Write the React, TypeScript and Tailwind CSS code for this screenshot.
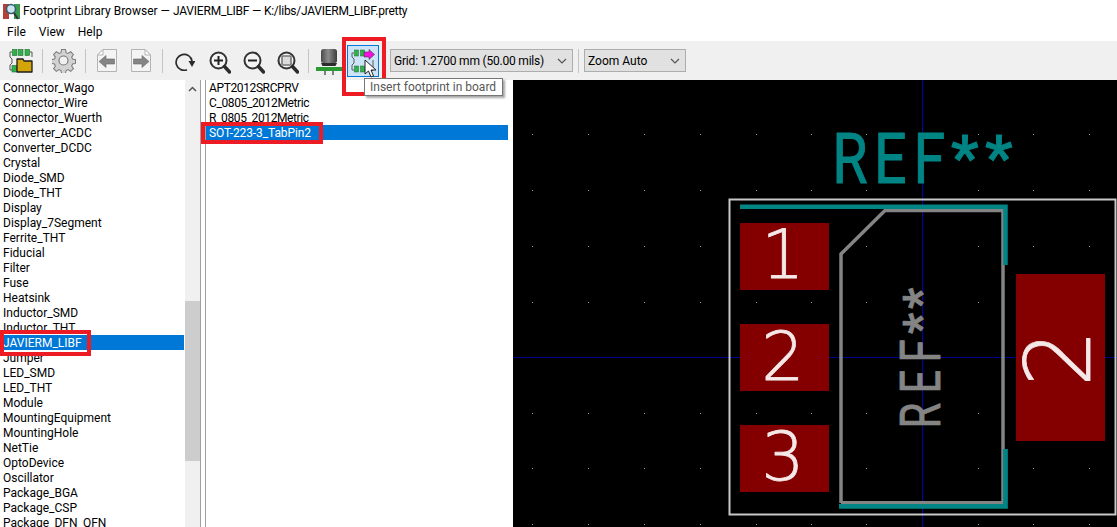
import React from "react";

const libraries = [
  "Connector_Wago", "Connector_Wire", "Connector_Wuerth", "Converter_ACDC", "Converter_DCDC", "Crystal",
  "Diode_SMD", "Diode_THT", "Display", "Display_7Segment", "Ferrite_THT", "Fiducial", "Filter", "Fuse",
  "Heatsink", "Inductor_SMD", "Inductor_THT", "JAVIERM_LIBF", "Jumper", "LED_SMD", "LED_THT", "Module",
  "MountingEquipment", "MountingHole", "NetTie", "OptoDevice", "Oscillator", "Package_BGA", "Package_CSP",
  "Package_DFN_QFN",
];
const footprints = ["APT2012SRCPRV", "C_0805_2012Metric", "R_0805_2012Metric", "SOT-223-3_TabPin2"];

const gridXs = [532, 588, 644, 700, 756, 811, 866, 922, 978, 1033, 1089];
const gridYs = [134, 190, 246, 302, 357, 413, 468, 524];

function Sep({ ml }: { ml: string }) {
  return <div className={`h-[24px] w-px bg-[#c4c4c4] ${ml}`} />;
}

function OpenIcon() {
  return (
    <svg width="24" height="24" viewBox="0 0 24 24">
      <path d="M3 3H1v5l2 2v4l-2 2v5h2M21 3h2v5" fill="none" stroke="#555" strokeWidth="1" />
      <rect x="3.500" y="0.500" width="4.500" height="6" fill="#2fb24a" stroke="#1d6b2e" strokeWidth=".6" />
      <rect x="9.500" y="0.500" width="4.500" height="6" fill="#2fb24a" stroke="#1d6b2e" strokeWidth=".6" />
      <rect x="16" y="0.500" width="4.500" height="6" fill="#2fb24a" stroke="#1d6b2e" strokeWidth=".6" />
      <rect x="3" y="16.500" width="4.500" height="6.500" fill="#2fb24a" stroke="#1d6b2e" strokeWidth=".6" />
      <path d="M8 10h6l1 2h8v11H8z" fill="#d4a50a" stroke="#1c1c1c" strokeWidth="1.300" strokeLinejoin="round" />
    </svg>
  );
}

function GearIcon() {
  return (
    <svg width="24" height="24" viewBox="0 0 24 24">
      <path
        d="M10 .5h4l.7 3.300 2 .9 2.800-1.800 2.800 2.800-1.800 2.800.9 2 3.100.7v3.800l-3.100.7-.9 2 1.800 2.800-2.800 2.800-2.800-1.800-2 .9-.7 3.100h-4l-.7-3.100-2-.9-2.800 1.800-2.800-2.800 1.800-2.800-.9-2-3.200-.7v-3.800l3.200-.7.9-2-1.800-2.800 2.800-2.800 2.800 1.800 2-.9z"
        fill="#d2d2d2"
        stroke="#7c7c7c"
        strokeWidth="1.100"
        transform="scale(.96)"
      />
      <circle cx="11.500" cy="11.500" r="4.500" fill="#f0f0f0" stroke="#7c7c7c" strokeWidth="1.200" />
    </svg>
  );
}

function PageArrow({ flip }: { flip?: boolean }) {
  return (
    <svg width="20" height="23" viewBox="0 0 20 23">
      <g transform={flip ? "translate(20 0) scale(-1 1)" : undefined}>
        <path d="M6 .5h13.500v22H.5V6z" fill="#f4f4f4" stroke="#b4b4b4" />
        <path d="M6 .5V6H.5z" fill="#fff" stroke="#b4b4b4" />
        <path d="M2 12.500l7-6v3.500h8.500v5H9v3.500z" fill="#858585" stroke="#6a6a6a" strokeWidth=".6" />
      </g>
    </svg>
  );
}

function RedoIcon() {
  return (
    <svg width="20" height="20" viewBox="0 0 20 20">
      <path d="M17 10A8 8 0 1 0 12 18.800" fill="none" stroke="#2b2b2b" strokeWidth="1.700" />
      <path d="M13.500 10h7l-3.500 6z" fill="#2b2b2b" />
    </svg>
  );
}

function Magnifier({ kind }: { kind: "in" | "out" | "fit" }) {
  return (
    <svg className="mt-[3px]" width="22" height="23" viewBox="0 0 22 23">
      <circle cx="9.500" cy="9.500" r="8" fill="#f4f4f4" stroke="#333" strokeWidth="2" />
      <path d="M15.500 15.500l5 5.500" stroke="#2b2b2b" strokeWidth="3.400" strokeLinecap="round" />
      {kind !== "fit" && <path d="M5 9.500h9" stroke="#222" strokeWidth="2" />}
      {kind === "in" && <path d="M9.500 5v9" stroke="#222" strokeWidth="2" />}
      {kind === "fit" && <rect x="5" y="5" width="9" height="9" rx="1" fill="#dcdcdc" stroke="#777" strokeWidth="1.600" />}
    </svg>
  );
}

function CapacitorIcon() {
  return (
    <svg className="mt-[3px]" width="26" height="26" viewBox="0 0 26 26">
      <defs>
        <linearGradient id="capBody" x1="0" x2="1" y1="0" y2="0">
          <stop offset="0" stopColor="#4a4a4a" />
          <stop offset=".45" stopColor="#8c8c8c" />
          <stop offset="1" stopColor="#3c3c3c" />
        </linearGradient>
      </defs>
      <rect x="5" y="0" width="16" height="14" rx="2.500" fill="url(#capBody)" />
      <path d="M5 14h16l-1.500 3h-13z" fill="#2c2c2c" />
      <rect x="0" y="18" width="26" height="4" fill="#2a9a32" />
      <path d="M9 22v4M17 22v4" stroke="#444" strokeWidth="1.300" />
    </svg>
  );
}

function InsertIcon() {
  return (
    <svg width="24" height="24" viewBox="0 0 24 24">
      <path d="M3 4H1v4l2 2v4l-2 2v5h2M14 21.500h8V11" fill="none" stroke="#5a5a5a" strokeWidth="1" />
      <rect x="3.500" y="1" width="4" height="6" fill="#2fb24a" stroke="#1d6b2e" strokeWidth=".5" />
      <rect x="9.500" y="1" width="4" height="6" fill="#2fb24a" stroke="#1d6b2e" strokeWidth=".5" />
      <rect x="3.500" y="17" width="4" height="6" fill="#2fb24a" stroke="#1d6b2e" strokeWidth=".5" />
      <rect x="9.500" y="17" width="4" height="6" fill="#2fb24a" stroke="#1d6b2e" strokeWidth=".5" />
      <path d="M13 3h5V.5l5.500 5-5.500 5V8h-5z" fill="#f510e0" stroke="#3a3a3a" strokeWidth=".6" />
    </svg>
  );
}

function Dropdown({ label, width, ml, tight }: { label: string; width: string; ml: string; tight?: boolean }) {
  return (
    <div className={`flex h-[23px] items-center justify-between border border-[#adadad] bg-[#e1e1e1] pl-[3px] pr-[5px] ${width} ${ml}`}>
      <span className={tight ? "tracking-[-0.2px]" : ""}>{label}</span>
      <svg width="10" height="6" viewBox="0 0 10 6">
        <path d="M1 1l4 4 4-4" fill="none" stroke="#555" strokeWidth="1.200" />
      </svg>
    </div>
  );
}

function ListRows({ items, selected, tight }: { items: string[]; selected: string; tight?: boolean }) {
  return (
    <>
      {items.map((item) => (
        <div
          key={item}
          className={`h-[15px] pl-[3px] leading-[17px] whitespace-nowrap ${item === selected ? "bg-[#0078d7] text-white" : ""} ${tight ? (item === selected ? "tracking-[-0.1px]" : "tracking-[-0.38px]") : ""}`}
        >
          {item}
        </div>
      ))}
    </>
  );
}

function FootprintCanvas() {
  const font = "Roboto, 'Liberation Sans', sans-serif";
  return (
    <svg className="h-full w-full" viewBox="513 80 604 447">
      {gridXs.map((x) =>
        gridYs.map((y) => <rect key={`${x}-${y}`} x={x} y={y} width="1" height="1" fill="#9a9a9a" />)
      )}
      <path d="M922.500 80V527" stroke="#0000b4" strokeWidth="1" />
      <path d="M513 357.500H1117" stroke="#000090" strokeWidth="1" />

      <g fontFamily={font} fill="#008484" stroke="#008484" strokeLinejoin="round">
        <g transform="translate(0 183) scale(.82 1)">
          <text x="1015 1066 1114" fontSize="70" fontWeight="400" strokeWidth="1">REF</text>
        </g>
        <text x="951 985" y="179" fontSize="62" fontWeight="500" strokeWidth="1">**</text>
      </g>

      <rect x="729.500" y="199.500" width="386" height="315" fill="none" stroke="#c8c8c8" strokeWidth="2" />

      <rect x="740" y="223" width="89" height="67" fill="#840000" />
      <rect x="740" y="324" width="89" height="67" fill="#840000" />
      <rect x="740" y="425" width="89" height="67" fill="#840000" />
      <rect x="1016" y="274" width="89" height="167" fill="#840000" />

      <path d="M841 503V254L885 210.500H1003V502.700H841" fill="none" stroke="#848484" strokeWidth="3.500" />
      <path d="M740 206.800H1005.500V265" fill="none" stroke="#008484" strokeWidth="4.500" />
      <path d="M1005.500 449V506.300H839" fill="none" stroke="#008484" strokeWidth="4.700" />

      <g fontFamily={font} fill="#848484" stroke="#848484" strokeLinejoin="round">
        <g transform="translate(940 427) rotate(-90) scale(.76 1)">
          <text x="-2 44 85" fontSize="55" fontWeight="400" strokeWidth=".8">REF</text>
        </g>
        <text transform="translate(937 427) rotate(-90)" x="93 118" fontSize="48" fontWeight="500" strokeWidth=".8">**</text>
      </g>

      <g fontFamily="'DejaVu Sans', sans-serif" fontSize="68" fontWeight="200" fill="#f4e8e8" stroke="#f4e8e8" strokeWidth=".8" strokeLinejoin="round">
        <text x="783" y="278" textAnchor="middle">1</text>
        <text x="783" y="380" textAnchor="middle">2</text>
        <text x="783" y="480" textAnchor="middle">3</text>
        <text transform="translate(1090 358) rotate(-90)" textAnchor="middle" fontSize="90">2</text>
      </g>
    </svg>
  );
}

export default function App() {
  return (
    <div className="relative flex h-[527px] w-[1117px] flex-col overflow-hidden bg-white font-['Roboto',sans-serif] text-[12px] text-black">
      {/* title bar */}
      <div className="flex h-[22px] items-center pl-[3px]">
        <svg width="17" height="17" viewBox="0 0 17 17">
          <rect x="0" y="1" width="6" height="15" fill="#b5403a" />
          <rect x="11" y="1" width="6" height="15" fill="#3a9a4f" />
          <circle cx="8" cy="6" r="4.500" fill="#cfe3ea" stroke="#2f5f77" strokeWidth="1.500" />
          <path d="M11 10l4 6" stroke="#333" strokeWidth="2" />
        </svg>
        <span className="ml-[3px] whitespace-pre">
          Footprint Library Browser — <span className="tracking-[-0.2px]">JAVIERM_LIBF — </span>
          <span className="tracking-[-0.25px]">K:/libs/JAVIERM_LIBF.pretty</span>
        </span>
      </div>

      {/* menu */}
      <div className="flex h-[19px] items-center pl-[7px]">
        <span>File</span>
        <span className="ml-[13px]">View</span>
        <span className="ml-[13px]">Help</span>
      </div>

      {/* toolbar */}
      <div className="flex h-[39px] items-center bg-[#f0f0f0] pl-[9px]">
        <OpenIcon />
        <Sep ml="ml-[9px]" />
        <div className="ml-[9px]"><GearIcon /></div>
        <Sep ml="ml-[9px]" />
        <div className="ml-[11px]"><PageArrow /></div>
        <div className="ml-[14px]"><PageArrow flip /></div>
        <Sep ml="ml-[11px]" />
        <div className="ml-[12px]"><RedoIcon /></div>
        <div className="ml-[14px]"><Magnifier kind="in" /></div>
        <div className="ml-[12px]"><Magnifier kind="out" /></div>
        <div className="ml-[12px]"><Magnifier kind="fit" /></div>
        <Sep ml="ml-[9px]" />
        <div className="ml-[7px]"><CapacitorIcon /></div>
        <div className="ml-[5px] flex h-[32px] w-[32px] items-center justify-center border border-[#0078d7] bg-[#cce4f7]">
          <InsertIcon />
        </div>
        <Dropdown label="Grid: 1.2700 mm (50.00 mils)" width="w-[183px]" ml="ml-[11px]" tight />
        <Sep ml="ml-[5px]" />
        <Dropdown label="Zoom Auto" width="w-[102px]" ml="ml-[5px]" />
      </div>

      {/* panes */}
      <div className="flex min-h-0 flex-1">
        <div className="flex w-[201px] shrink-0 overflow-hidden border-r border-[#a0a0a0]">
          <div className="mr-px w-[184px] shrink-0">
            <ListRows items={libraries} selected="JAVIERM_LIBF" />
          </div>
          <div className="flex w-[15px] flex-col bg-[#f0f0f0]">
            <div className="flex h-[17px] items-center justify-center">
              <svg width="9" height="6" viewBox="0 0 9 6">
                <path d="M1 5l3.500-3.500L8 5" fill="none" stroke="#555" strokeWidth="1.500" />
              </svg>
            </div>
            <div className="mt-[204px] h-[160px] bg-[#cdcdcd]" />
          </div>
        </div>
        <div className="ml-[4px] w-[303px] shrink-0 overflow-hidden border-l border-[#a0a0a0]">
          <ListRows items={footprints} selected="SOT-223-3_TabPin2" tight />
        </div>
        <div className="ml-[5px] flex-1 bg-black">
          <FootprintCanvas />
        </div>
      </div>

      {/* red annotations, tooltip and pointer lie over the window */}
      <div className="absolute left-[342px] top-[37px] h-[59px] w-[44px] border-[4px] border-[#ed1c24]" />
      <div className="absolute left-[0px] top-[330px] h-[26px] w-[91px] border-[4px] border-[#ed1c24]" />
      <div className="absolute left-[201px] top-[122px] h-[22px] w-[122px] border-[4px] border-[#ed1c24]" />
      <div className="absolute left-[364px] top-[78px] flex h-[18px] w-[139px] items-center border border-[#767676] bg-white pl-[5px] whitespace-nowrap text-[#575757] shadow-[2px_2px_2px_rgba(0,0,0,0.35)]">
        Insert footprint in board
      </div>
      <svg className="absolute left-[364px] top-[59px]" width="14" height="19" viewBox="0 0 14 19">
        <path d="M1 1v14l3.500-3 2.500 6 2.500-1-2.500-6h5z" fill="#fff" stroke="#222" strokeWidth="1" />
      </svg>
    </div>
  );
}
